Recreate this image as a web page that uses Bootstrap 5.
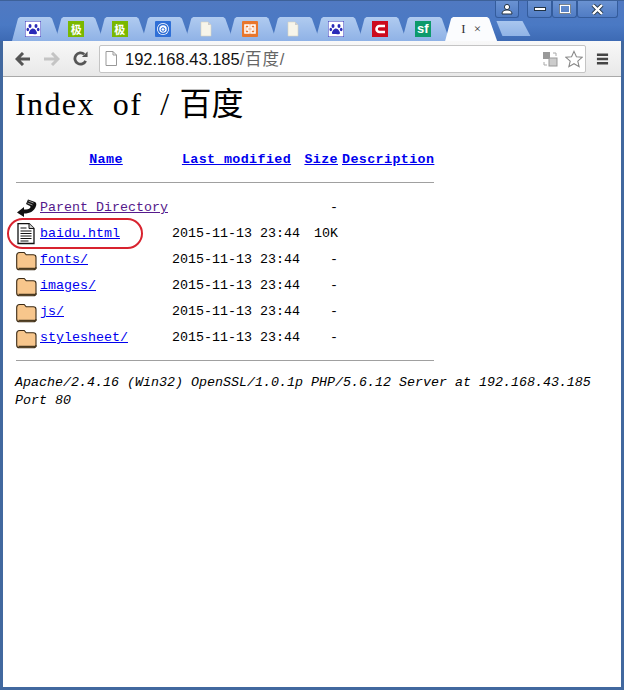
<!DOCTYPE html>
<html lang="zh"><head><meta charset="utf-8"><title>Index of /百度</title>
<link rel="stylesheet" href="https://cdn.jsdelivr.net/npm/bootstrap@5.3.0/dist/css/bootstrap.min.css">
<style>
html,body{height:690px;overflow:hidden;background:#fff}
.win{height:690px;width:624px;background:#fff;position:relative;border:solid #41689f;border-width:0 3px 3px 3px;}
.topbar{height:41px;margin:0 -3px;background:linear-gradient(#5079c2,#4a79c4 60%,#3d6ab4);border-top:1px solid #3d6199;position:relative}
.ctl{position:absolute;top:0;right:6px;height:17px;gap:8px}
.ctlb{height:17px;background:linear-gradient(#6a92d2,#507cc4);border:1px solid #345c9c;border-top:0;border-radius:0 0 3px 3px;color:#fff}
.tabs{height:24px;position:absolute;left:12px;top:16px}
.tb{width:48px;height:24px;margin-right:-4.7px;padding-right:6px;clip-path:polygon(0 100%,6px 6%,8px 0,38px 0,40px 6%,48px 100%);background:linear-gradient(#b0cbf0,#8fb2e6)}
.tb.on{background:#fbfcfe;width:52px;margin-left:0;padding-right:0;font:13px "Liberation Serif",serif;color:#333;gap:8px;clip-path:polygon(0 100%,6px 6%,8px 0,42px 0,44px 6%,52px 100%)}
.tb.nw{width:36px;height:15px;margin-top:4px;margin-left:4px;padding:0;clip-path:polygon(0 0,26px 0,34px 100%,6px 100%);background:linear-gradient(#a9c6ee,#90b3e6)}
.fav{width:16px;height:16px;display:block}
.ji{width:16px;height:16px;background:#7ab800;color:#fff;font:bold 11px/16px "Noto Sans CJK SC",sans-serif;text-align:center}
.sf{width:16px;height:16px;background:#0d9a6b;color:#fff;font:bold 13px/15px "Liberation Sans",sans-serif;text-align:center}
.tool{height:36px;background:linear-gradient(#f8f8f8,#e8e8e8);border-bottom:1px solid #a9a9a9;padding-left:12px}
.addr{width:487px;height:28px;margin-left:11px;background:#fff;border:1px solid #c4c4c4;border-radius:2px;font:16.5px/26px "Liberation Sans","Noto Sans CJK SC",sans-serif;color:#111;padding-left:5px}
.addr i{font-style:normal;color:#666;letter-spacing:.8px}
.page{padding:0 13px;font:13.33px/18px "Liberation Mono","Noto Sans CJK SC",monospace;color:#000}
.ttl{font:32px/36px "Liberation Serif","Noto Sans CJK SC",serif;letter-spacing:1.4px;word-spacing:8.6px;margin:9px 0 0 -1px;height:36px}
.ttl span{letter-spacing:0;margin-left:9px}
.lst{margin-top:25px;border-collapse:separate;border-spacing:0}
.lst a{color:#00e;text-decoration:underline}
.lst a.vis{color:#551a8b}
.lst td,.lst th{padding:0;height:26px;vertical-align:middle;font-weight:normal}
.lst th{font-weight:bold;text-align:center;letter-spacing:.4px}
.lst th a{color:#00e}
.c0{width:24px}.c1{width:132px}.c2{width:129px}
.lst .c3{width:37px;text-align:right}
.lst .sz{text-align:right}
.ic{display:block;width:22px;height:22px}
.ic.lo{margin-top:2px}
.rule{height:1px;background:#a0a0a0;width:418px}
.lst .rulew td{height:22px;padding-top:9px;vertical-align:top}
.lst .rulew.end td{height:10px}
.addrline{margin:13px 0 0 -1px;width:590px;font-style:italic;line-height:18px}
.oval{position:absolute;left:4px;top:218px;width:136px;height:31px;border:2px solid #d8232f;border-radius:16px;pointer-events:none}
</style></head><body>
<div class="win">
 <div class="topbar">
  <div class="ctl d-flex">
   <div class="ctlb d-flex align-items-center justify-content-center" style="width:24px"><svg width="12" height="11" viewBox="0 0 12 11"><circle cx="6" cy="3" r="2.6" fill="#fff" stroke="#234"/><path d="M1 10c0-3 2-4 5-4s5 1 5 4z" fill="#fff" stroke="#234"/></svg></div>
   <div class="d-flex">
    <div class="ctlb d-flex align-items-center justify-content-center" style="width:25px"><svg width="12" height="6" viewBox="0 0 12 6"><rect x=".5" y="1.500" width="11" height="3" fill="#fff" stroke="#234"/></svg></div>
    <div class="ctlb d-flex align-items-center justify-content-center" style="width:25px"><svg width="12" height="10" viewBox="0 0 12 10"><rect x="1" y="1" width="10" height="8" fill="none" stroke="#fff" stroke-width="2"/><rect x=".5" y=".5" width="11" height="9" fill="none" stroke="#234" stroke-width=".6"/></svg></div>
    <div class="ctlb d-flex align-items-center justify-content-center" style="width:41px"><svg width="13" height="11" viewBox="0 0 13 11"><path d="M2 1l9 9M11 1l-9 9" stroke="#234" stroke-width="4"/><path d="M2 1l9 9M11 1l-9 9" stroke="#fff" stroke-width="2.400"/></svg></div>
   </div>
  </div>
  <div class="tabs d-flex">
   <div class="tb d-flex align-items-center justify-content-center"><svg class="fav" viewBox="0 0 16 16"><rect width="16" height="16" fill="#fff" stroke="#2a2ab8"/><g fill="#2a2ab8"><ellipse cx="5" cy="5" rx="1.500" ry="2"/><ellipse cx="11" cy="5" rx="1.500" ry="2"/><ellipse cx="2.800" cy="8.500" rx="1.300" ry="1.700"/><ellipse cx="13.200" cy="8.500" rx="1.300" ry="1.700"/><path d="M8 7.500c2 0 4 3 4 4.500s-2 1.500-4 1-4 1-4-1 2-4.500 4-4.500z"/></g></svg></div>
   <div class="tb d-flex align-items-center justify-content-center"><div class="ji">极</div></div>
   <div class="tb d-flex align-items-center justify-content-center"><div class="ji">极</div></div>
   <div class="tb d-flex align-items-center justify-content-center"><svg class="fav" viewBox="0 0 16 16"><rect width="16" height="16" rx="1" fill="#2f6fd6"/><circle cx="8" cy="8" r="6" fill="#fff"/><circle cx="8" cy="8" r="4.500" fill="none" stroke="#2f6fd6" stroke-width="1.500"/><circle cx="8" cy="8.500" r="1.800" fill="none" stroke="#2f6fd6"/></svg></div>
   <div class="tb d-flex align-items-center justify-content-center"><svg class="fav" viewBox="0 0 16 16"><path d="M3 1h7l3 3v11H3z" fill="#f7f5ea" stroke="#d8d4c0" stroke-width=".6"/><path d="M10 1v3h3z" fill="#ccc"/></svg></div>
   <div class="tb d-flex align-items-center justify-content-center"><svg class="fav" viewBox="0 0 16 16"><rect width="16" height="16" rx="1" fill="#e8762c"/><path d="M3 4h4v3H5v2h2v3H3zM13 4H9v3h2v2H9v3h4z" fill="none" stroke="#fff" stroke-width="1.600"/></svg></div>
   <div class="tb d-flex align-items-center justify-content-center"><svg class="fav" viewBox="0 0 16 16"><path d="M3 1h7l3 3v11H3z" fill="#f7f5ea" stroke="#d8d4c0" stroke-width=".6"/><path d="M10 1v3h3z" fill="#ccc"/></svg></div>
   <div class="tb d-flex align-items-center justify-content-center"><svg class="fav" viewBox="0 0 16 16"><rect width="16" height="16" fill="#fff" stroke="#2a2ab8"/><g fill="#2a2ab8"><ellipse cx="5" cy="5" rx="1.500" ry="2"/><ellipse cx="11" cy="5" rx="1.500" ry="2"/><ellipse cx="2.800" cy="8.500" rx="1.300" ry="1.700"/><ellipse cx="13.200" cy="8.500" rx="1.300" ry="1.700"/><path d="M8 7.500c2 0 4 3 4 4.500s-2 1.500-4 1-4 1-4-1 2-4.500 4-4.500z"/></g></svg></div>
   <div class="tb d-flex align-items-center justify-content-center"><svg class="fav" viewBox="0 0 16 16"><rect width="16" height="16" fill="#cc0a1e"/><path d="M13 5H7.500a3 3 0 0 0 0 6H13" fill="none" stroke="#fff" stroke-width="2.600"/></svg></div>
   <div class="tb d-flex align-items-center justify-content-center"><div class="sf">sf</div></div>
   <div class="tb on d-flex align-items-center justify-content-center"><span>I</span><span>×</span></div>
   <div class="tb nw"></div>
  </div>
 </div>
 <div class="tool d-flex align-items-center">
  <svg width="15" height="14" viewBox="0 0 15 14"><path d="M8 1L2 7l6 6M2 7h13" fill="none" stroke="#555" stroke-width="3"/></svg>
  <svg class="fwd" style="margin-left:14px" width="16" height="14" viewBox="0 0 16 14"><path d="M8 1l6 6-6 6M14 7H0" fill="none" stroke="#c4c4c4" stroke-width="3"/></svg>
  <svg style="margin-left:13px" width="15" height="15" viewBox="0 0 16 16"><path d="M13.500 10.500A6 6 0 1 1 12 3.500" fill="none" stroke="#555" stroke-width="3"/><path d="M9.500 6.500H15.500V.5z" fill="#555"/></svg>
  <div class="addr d-flex align-items-center">
   <svg class="me-2" width="12" height="15" viewBox="0 0 12 15"><path d="M1 .5h7l3.500 3.500v10.500H1z" fill="#fff" stroke="#999"/><path d="M8 .5V4h3.500" fill="none" stroke="#999"/></svg>
   <span>192.168.43.185<i>/百度/</i></span>
   <svg class="ms-auto" width="16" height="16" viewBox="0 0 16 16"><rect x="1" y="1" width="7" height="7" fill="#999"/><rect x="7" y="7" width="8" height="8" fill="#ccc" stroke="#999"/><path d="M2 11v3h3M14 5V2h-3" fill="none" stroke="#aaa"/></svg>
   <svg style="margin-left:7px;margin-right:2px" width="18" height="18" viewBox="0 0 20 19"><path d="M10 1l2.700 6 6.300.6-4.800 4.200 1.500 6.200L10 14.700 4.300 18l1.500-6.200L1 7.600 7.300 7z" fill="#fff" stroke="#888" stroke-width="1.200"/></svg>
  </div>
  <svg style="margin-left:10px" width="13" height="12" viewBox="0 0 14 12"><path d="M1 1.500h12M1 6h12M1 10.500h12" stroke="#444" stroke-width="2.600"/></svg>
 </div>
 <div class="page">
  <h1 class="ttl">Index of /<span>百度</span></h1>
  <table class="lst">
   <tr><th class="c0"></th><th class="c1"><a href="#">Name</a></th><th class="c2"><a href="#">Last modified</a></th><th class="c3"><a href="#">Size</a></th><th class="ps-1 text-start"><a href="#">Description</a></th></tr>
   <tr class="rulew"><td colspan="5"><div class="rule"></div></td></tr>
   <tr><td><svg class="ic lo" viewBox="0 0 22 22"><path d="M1 14.500L8 9v2.500c3 0 5-.5 6-1.500s.5-2-1-2.500L10 6l2-4.500 7 2.500c1.500 1 1.500 2.500 1 4-1.500 5-6 7.500-12 7.500V19z" fill="#111"/><path d="M12.500 3l5 2M11.500 5l5 2" stroke="#999" stroke-width="1"/></svg></td><td><a class="vis" href="#">Parent Directory</a></td><td></td><td class="sz">-</td><td></td></tr>
   <tr><td><svg class="ic" viewBox="0 1 22 22"><path d="M2 1.500h11l5 5v15H2z" fill="#fff" stroke="#111" stroke-width="1.300"/><path d="M13 1.500v5h5" fill="#ccc" stroke="#111"/><path d="M4.500 6h6M4.500 9h11M4.500 11.500h11M4.500 14h11M4.500 16.500h11M4.500 19h8" stroke="#111" stroke-width="1.200"/></svg></td><td><a href="#">baidu.html</a></td><td>2015-11-13 23:44</td><td class="sz">10K</td><td></td></tr>
   <tr><td><svg class="ic lo" viewBox="0 0 22 22"><path d="M.7 5.500c0-2 1-3 3-3h4.500l2 2.300h7.100c1.800 0 2.700 1 2.700 2.700v9.500c0 1.800-1 2.800-2.700 2.800H3.500c-2 0-2.800-1-2.800-2.800z" fill="#f7c68c" stroke="#3a2a15" stroke-width="1.100"/><path d="M2.500 18.700h16.500c.8 0 1-.8 1-1.500" fill="none" stroke="#4a3a20" stroke-width="1.800"/></svg></td><td><a href="#">fonts/</a></td><td>2015-11-13 23:44</td><td class="sz">-</td><td></td></tr>
   <tr><td><svg class="ic lo" viewBox="0 0 22 22"><path d="M.7 5.500c0-2 1-3 3-3h4.500l2 2.300h7.100c1.800 0 2.700 1 2.700 2.700v9.500c0 1.800-1 2.800-2.700 2.800H3.500c-2 0-2.800-1-2.800-2.800z" fill="#f7c68c" stroke="#3a2a15" stroke-width="1.100"/><path d="M2.500 18.700h16.500c.8 0 1-.8 1-1.500" fill="none" stroke="#4a3a20" stroke-width="1.800"/></svg></td><td><a href="#">images/</a></td><td>2015-11-13 23:44</td><td class="sz">-</td><td></td></tr>
   <tr><td><svg class="ic lo" viewBox="0 0 22 22"><path d="M.7 5.500c0-2 1-3 3-3h4.500l2 2.300h7.100c1.800 0 2.700 1 2.700 2.700v9.500c0 1.800-1 2.800-2.700 2.800H3.500c-2 0-2.800-1-2.800-2.800z" fill="#f7c68c" stroke="#3a2a15" stroke-width="1.100"/><path d="M2.500 18.700h16.500c.8 0 1-.8 1-1.500" fill="none" stroke="#4a3a20" stroke-width="1.800"/></svg></td><td><a href="#">js/</a></td><td>2015-11-13 23:44</td><td class="sz">-</td><td></td></tr>
   <tr><td><svg class="ic lo" viewBox="0 0 22 22"><path d="M.7 5.500c0-2 1-3 3-3h4.500l2 2.300h7.100c1.800 0 2.700 1 2.700 2.700v9.500c0 1.800-1 2.800-2.700 2.800H3.500c-2 0-2.800-1-2.800-2.800z" fill="#f7c68c" stroke="#3a2a15" stroke-width="1.100"/><path d="M2.500 18.700h16.500c.8 0 1-.8 1-1.500" fill="none" stroke="#4a3a20" stroke-width="1.800"/></svg></td><td><a href="#">stylesheet/</a></td><td>2015-11-13 23:44</td><td class="sz">-</td><td></td></tr>
   <tr class="rulew end"><td colspan="5"><div class="rule"></div></td></tr>
  </table>
  <address class="addrline">Apache/2.4.16 (Win32) OpenSSL/1.0.1p PHP/5.6.12 Server at 192.168.43.185 Port 80</address>
 </div>
 <div class="oval"></div>
</div>
<script src="https://cdn.jsdelivr.net/npm/bootstrap@5.3.0/dist/js/bootstrap.bundle.min.js"></script>
</body></html>
